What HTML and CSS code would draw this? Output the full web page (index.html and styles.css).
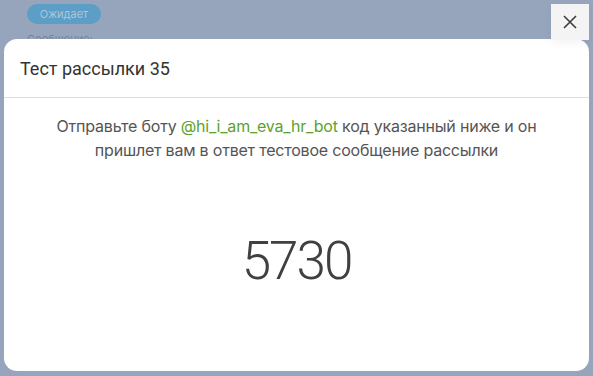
FILE: index.html
```html
<!DOCTYPE html>
<html lang="ru">
<head>
<meta charset="UTF-8" />
<title>Тест рассылки</title>
<link rel="stylesheet" href="styles.css">
</head>
<body>
  <div class="page">
    <span class="badge">Ожидает</span>
    <div class="label">Сообщение:</div>
  </div>

  <div class="overlay">
    <div class="modal" role="dialog" aria-label="Тест рассылки 35">
      <div class="modal-header">Тест рассылки 35</div>
      <div class="modal-body">
        <p class="hint">Отправьте боту <a href="#" class="bot">@hi_i_am_eva_hr_bot</a> код указанный ниже и он пришлет вам в ответ тестовое сообщение рассылки</p>
        <div class="code">5730</div>
      </div>
    </div>
    <button class="close-btn" aria-label="Закрыть">
      <svg width="14" height="14" viewBox="0 0 14 14"><path d="M1 1L13 13M13 1L1 13" stroke="#3d3d3d" stroke-width="1.6" fill="none"/></svg>
    </button>
  </div>
</body>
</html>
```

FILE: styles.css
```css
* {
  box-sizing: border-box;
}
html, body {
  margin: 0;
  padding: 0;
  height: 100%;
}
body {
  background: #97a5bc;
  font-family: Inter, "Noto Sans", sans-serif;
  overflow: hidden;
}
.page {
  padding: 2px 27px;
}
.badge {
  display: inline-block;
  width: 74px;
  height: 20px;
  line-height: 20px;
  border-radius: 10px;
  background: #5c9ec6;
  color: #a9c6db;
  font-size: 11px;
  text-align: center;
}
.label {
  margin-top: 8px;
  font-size: 11px;
  color: #76839a;
}
.overlay {
  position: absolute;
  inset: 0;
}
.modal {
  position: absolute;
  left: 4px;
  top: 39px;
  width: 585px;
  height: 332px;
  background: #fff;
  border-radius: 13px;
  overflow: hidden;
}
.modal-header {
  height: 59px;
  padding: 0 16px;
  display: flex;
  align-items: center;
  border-bottom: 1px solid #dedede;
  font-family: Roboto, "Liberation Sans", sans-serif;
  font-size: 18px;
  color: #333;
}
.modal-body {
  padding: 16px 30px 0;
  text-align: center;
}
.hint {
  margin: 0;
  font-size: 16px;
  line-height: 24px;
  color: #555;
  letter-spacing: -0.2px;
}
.bot {
  color: #5ba22e;
  text-decoration: none;
}
.code {
  margin-top: 68px;
  font-family: Roboto, "Liberation Sans", sans-serif;
  font-weight: 300;
  font-size: 53px;
  letter-spacing: -2px;
  color: #404040;
}
.close-btn {
  position: absolute;
  left: 551px;
  top: 4px;
  width: 38px;
  height: 36px;
  border: none;
  padding: 0;
  background: #f4f4f4;
  display: flex;
  align-items: center;
  justify-content: center;
  cursor: pointer;
  box-shadow: 0 4px 8px rgba(0, 0, 0, 0.04);
}
```
